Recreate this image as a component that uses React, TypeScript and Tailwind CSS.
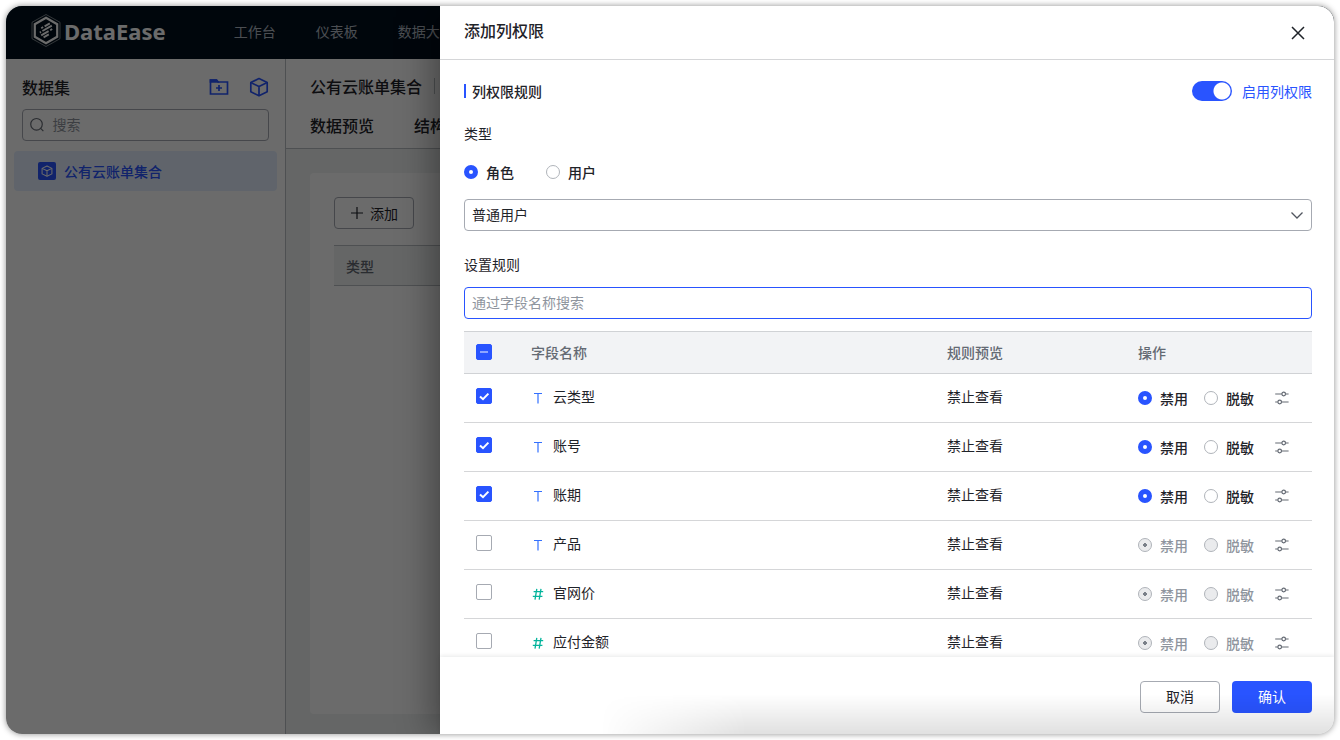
import { useState } from "react";
import { clsx } from "clsx";

interface Field {
  id: string;
  name: string;
  type: "text" | "number";
  checked: boolean;
}

const FIELDS: Field[] = [
  { id: "cloud", name: "云类型", type: "text", checked: true },
  { id: "account", name: "账号", type: "text", checked: true },
  { id: "period", name: "账期", type: "text", checked: true },
  { id: "product", name: "产品", type: "text", checked: false },
  { id: "price", name: "官网价", type: "number", checked: false },
  { id: "payable", name: "应付金额", type: "number", checked: false },
];

const LogoIcon = () => (
  <svg width="32" height="36" viewBox="0 0 32 36" fill="none" stroke="#fff">
    <path d="M16 1.5 30 9.3v16.4L16 33.5 2 25.7V9.3z" strokeWidth="0.8" opacity="0.6" />
    <path d="M16 4.8 27.2 11.2v12.6L16 30.2 4.8 23.8V11.2z" strokeWidth="2.2" />
    <path
      d="M11.2 15.2l2-1.2M14.6 13.4l5.2-3M9.8 19.6l1.2-.7M12.4 18l9.4-5.4M11.2 22.4l7.4-4.3M20.2 17.2l2-1.2M13.6 24.4l5.2-3"
      strokeWidth="1.8"
    />
  </svg>
);

const CubeIcon = ({ size = 20 }: { size?: number }) => (
  <svg
    width={size}
    height={size}
    viewBox="0 0 20 20"
    fill="none"
    stroke="currentColor"
    strokeWidth="1.7"
    strokeLinejoin="round"
  >
    <path d="M10 1.6 18.2 5.6v9.2L10 18.8l-8.2-4V5.6z" />
    <path d="M1.8 5.6 10 9.6l8.2-4M10 9.6v9.2" />
  </svg>
);

const FolderAddIcon = () => (
  <svg width="20" height="20" viewBox="0 0 20 20" fill="none" stroke="currentColor" strokeWidth="1.7">
    <path d="M1.5 17V3h6l1.5 2h9.5v12z" />
    <path d="M1.5 3h6l1.5 2H1.5z" fill="currentColor" />
    <path d="M10 8v6M7 11h6" />
  </svg>
);

const SearchIcon = () => (
  <svg width="16" height="16" viewBox="0 0 16 16" fill="none" stroke="#646a73" strokeWidth="1.3">
    <circle cx="7.2" cy="7.2" r="6.4" />
    <path d="M11.8 11.8 14.8 14.8" />
  </svg>
);

const SettingIcon = () => (
  <svg width="16" height="16" viewBox="0 0 16 16" fill="none" stroke="#646a73" strokeWidth="1.2">
    <path d="M1.2 4h6.6M11.6 4h3M1.2 12h2.6M7.6 12h7" />
    <circle cx="9.7" cy="4" r="1.8" />
    <circle cx="5.7" cy="12" r="1.8" />
  </svg>
);

const FieldIcon = ({ type }: { type: Field["type"] }) =>
  type === "text" ? (
    <svg className="mt-1" width="14" height="14" viewBox="0 0 14 14" fill="none" stroke="#3370ff" strokeWidth="1.2">
      <path d="M3 2.5h8M7 2.5v10" />
    </svg>
  ) : (
    <svg className="mt-1" width="14" height="14" viewBox="0 0 14 14" fill="none" stroke="#04b49c" strokeWidth="1.3">
      <path d="M2.6 4.6h9.6M1.8 9.4h9.6M5.8 1.8 4 12.6M10 1.8 8.2 12.6" />
    </svg>
  );

interface RadioProps {
  name: string;
  label: string;
  checked: boolean;
  disabled?: boolean;
  onChange: () => void;
}

const Radio = ({ name, label, checked, disabled, onChange }: RadioProps) => (
  <label
    className={clsx(
      "flex items-center gap-2 font-medium",
      disabled ? "text-[#8f959e]" : "text-[#1f2329]"
    )}
  >
    <input
      type="radio"
      name={name}
      checked={checked}
      disabled={disabled}
      onChange={onChange}
      className={clsx(
        "size-3.5 shrink-0 appearance-none rounded-full",
        disabled
          ? "border border-[#b0b4ba] bg-[#eaebed]"
          : checked
            ? "border-5 border-[#2954ff] bg-white"
            : "border border-[#b0b4ba] bg-white",
        disabled && checked && "bg-[radial-gradient(circle,#7a8089_2px,transparent_2px)]"
      )}
    />
    {label}
  </label>
);

interface CheckProps {
  label: string;
  checked: boolean;
  mixed?: boolean;
  onChange: () => void;
}

const Check = ({ label, checked, mixed, onChange }: CheckProps) => (
  <span className="grid size-4">
    <input
      type="checkbox"
      aria-label={label}
      checked={checked}
      onChange={onChange}
      className={clsx(
        "col-start-1 row-start-1 size-4 appearance-none rounded-xs border",
        checked || mixed ? "border-[#2954ff] bg-[#2954ff]" : "border-[#a6aab2] bg-white"
      )}
    />
    {(checked || mixed) && (
      <svg
        className="pointer-events-none col-start-1 row-start-1"
        width="16"
        height="16"
        viewBox="0 0 16 16"
        fill="none"
        stroke="#fff"
      >
        {mixed ? (
          <path d="M4 8h8" strokeWidth="1.2" opacity="0.8" />
        ) : (
          <path d="M4 8.4 7 11.2l5.4-5.6" strokeWidth="2" />
        )}
      </svg>
    )}
  </span>
);

const Workspace = () => (
  <div className="flex h-full flex-col bg-white text-[#1f2329]">
    <header className="flex h-[53px] shrink-0 items-center bg-[#00101e] pb-1 pl-6">
      <div className="flex items-center gap-0.5 text-white">
        <LogoIcon />
        <span className="font-['Noto_Sans'] text-[22px] leading-8 font-bold">DataEase</span>
      </div>
      <nav className="ml-17 flex gap-10 whitespace-nowrap text-[#b4bac4]">
        <a href="#workbench">工作台</a>
        <a href="#panel">仪表板</a>
        <a href="#screen">数据大屏</a>
      </nav>
    </header>
    <div className="flex min-h-0 flex-1">
      <aside className="w-[280px] shrink-0 border-r border-[#bbbfc4] px-2 pt-4">
        <div className="flex items-center justify-between px-2">
          <h2 className="text-base font-medium">数据集</h2>
          <div className="flex gap-5 text-[#2954ff]">
            <button aria-label="新建文件夹">
              <FolderAddIcon />
            </button>
            <button aria-label="新建数据集">
              <CubeIcon />
            </button>
          </div>
        </div>
        <label className="mx-2 mt-2.5 flex h-8 items-center gap-2 rounded border border-[#a6aab2] px-[7px]">
          <SearchIcon />
          <input
            type="text"
            aria-label="搜索"
            placeholder="搜索"
            className="w-full min-w-0 pb-0.5 outline-none placeholder:text-[#8f959e]"
          />
        </label>
        <a
          href="#dataset"
          className="mt-2.5 flex h-10 items-center gap-2 rounded bg-[#e4efff] pl-6 font-medium text-[#2954ff]"
        >
          <span className="grid size-[18px] place-items-center rounded-xs bg-[#2954ff] text-white">
            <CubeIcon size={12} />
          </span>
          公有云账单集合
        </a>
      </aside>
      <main className="flex min-w-0 flex-1 flex-col bg-[#f0f4f3]">
        <div className="border-b border-[#bbbfc4] bg-white px-6 pt-[15px]">
          <div className="flex items-center gap-3 text-base font-medium">
            公有云账单集合
            <span className="h-4 w-px bg-[#bbbfc4]" />
          </div>
          <div className="mt-3 flex gap-10 pb-2 text-base leading-[30px] font-medium">
            <a href="#preview">数据预览</a>
            <a href="#structure">结构</a>
          </div>
        </div>
        <section className="mx-6 mt-6 mb-5 flex-1 rounded bg-white p-6">
          <button className="flex h-8 w-20 items-center justify-center gap-1.5 rounded border border-[#a6aab2]">
            <svg width="14" height="14" viewBox="0 0 14 14" stroke="currentColor" strokeWidth="1.2">
              <path d="M1 7h12M7 1v12" />
            </svg>
            添加
          </button>
          <div className="mt-4 flex h-[41px] items-center border-y border-[#bbbfc4] bg-[#f0f4f3] px-3 font-medium text-[#646a73]">
            类型
          </div>
        </section>
      </main>
    </div>
  </div>
);

const ColumnPermissionDrawer = () => {
  const [enabled, setEnabled] = useState(true);
  const [target, setTarget] = useState("role");
  const [keyword, setKeyword] = useState("");
  const [selected, setSelected] = useState<string[]>(
    FIELDS.filter((field) => field.checked).map((field) => field.id)
  );
  const [rules, setRules] = useState<Record<string, string>>({});

  const toggleField = (id: string) => {
    setSelected((prev) =>
      prev.includes(id) ? prev.filter((item) => item !== id) : [...prev, id]
    );
  };

  const allChecked = selected.length === FIELDS.length;

  return (
    <div
      role="dialog"
      aria-label="添加列权限"
      className="absolute inset-y-0 right-0 left-[434px] flex flex-col bg-white text-[#1f2329] shadow-[-8px_0_32px_rgba(0,0,0,0.35)]"
    >
      <div className="flex h-[54px] shrink-0 items-center justify-between border-b border-[#d5d6d8] pr-7 pl-6">
        <h1 className="pb-1.5 text-base font-medium">添加列权限</h1>
        <button aria-label="关闭">
          <svg width="16" height="16" viewBox="0 0 16 16" stroke="#1f2329" strokeWidth="1.5">
            <path d="m2 2 12 12M14 2 2 14" />
          </svg>
        </button>
      </div>

      <div className="min-h-0 flex-1 overflow-hidden pr-[22px] pl-6">
        <div className="mt-5 flex items-center justify-between">
          <h2 className="flex items-center gap-1.5 font-medium">
            <span className="h-3.5 w-0.5 bg-[#2954ff]" />
            列权限规则
          </h2>
          <label className="flex items-center gap-2.5 text-[#2954ff]">
            <input
              type="checkbox"
              role="switch"
              checked={enabled}
              onChange={() => setEnabled(!enabled)}
              className="h-5 w-10 appearance-none rounded-full bg-[#bbbfc4] bg-[radial-gradient(circle_at_10px_10px,#fff_8px,transparent_9px)] checked:bg-[#2954ff] checked:bg-[radial-gradient(circle_at_30px_10px,#fff_8px,transparent_9px)]"
            />
            启用列权限
          </label>
        </div>

        <h3 className="mt-5">类型</h3>
        <div className="mt-[17px] flex gap-8">
          <Radio
            name="target"
            label="角色"
            checked={target === "role"}
            onChange={() => setTarget("role")}
          />
          <Radio
            name="target"
            label="用户"
            checked={target === "user"}
            onChange={() => setTarget("user")}
          />
        </div>
        <div className="mt-4 grid items-center">
          <select
            aria-label="角色"
            className="col-start-1 row-start-1 h-8 w-full appearance-none rounded border border-[#a6aab2] bg-white px-[7px] pb-0.5"
          >
            <option>普通用户</option>
          </select>
          <svg
            className="pointer-events-none col-start-1 row-start-1 mr-2 justify-self-end"
            width="14"
            height="14"
            viewBox="0 0 14 14"
            fill="none"
            stroke="#51565f"
            strokeWidth="1.3"
          >
            <path d="m1.5 4.5 5.5 5.5 5.5-5.5" />
          </svg>
        </div>

        <h3 className="mt-[22px]">
          <label htmlFor="field-search">设置规则</label>
        </h3>
        <input
          id="field-search"
          type="text"
          value={keyword}
          onChange={(e) => setKeyword(e.target.value)}
          placeholder="通过字段名称搜索"
          className="mt-3 block h-8 w-full rounded border border-[#2954ff] px-[7px] pb-0.5 outline-none placeholder:text-[#8f959e]"
        />

        <table className="mt-3 w-full table-fixed border-collapse text-left">
          <colgroup>
            <col className="w-[55px]" />
            <col />
            <col className="w-[191px]" />
            <col className="w-[186px]" />
          </colgroup>
          <thead>
            <tr className="h-[42px] border-y border-[#d0d2d5] bg-[#f2f3f5] text-[#646a73]">
              <th className="px-3 pb-0.5">
                <Check
                  label="全选"
                  checked={allChecked}
                  mixed={selected.length > 0 && !allChecked}
                  onChange={() => setSelected(allChecked ? [] : FIELDS.map((field) => field.id))}
                />
              </th>
              <th className="px-3 pb-0.5 font-medium">字段名称</th>
              <th className="px-3 pb-0.5 font-medium">规则预览</th>
              <th className="px-3 pb-0.5 font-medium">操作</th>
            </tr>
          </thead>
          <tbody>
            {FIELDS.filter((field) => field.name.includes(keyword)).map((field) => {
              const active = selected.includes(field.id);
              const rule = rules[field.id] ?? "ban";
              return (
                <tr key={field.id} className="h-[49px] border-b border-[#d5d6d8]">
                  <td className="px-3 pb-1">
                    <Check
                      label={field.name}
                      checked={active}
                      onChange={() => toggleField(field.id)}
                    />
                  </td>
                  <td className="px-3 pb-1">
                    <span className="flex items-center gap-2">
                      <FieldIcon type={field.type} />
                      {field.name}
                    </span>
                  </td>
                  <td className="px-3 pb-1">{rule === "ban" ? "禁止查看" : "脱敏"}</td>
                  <td className="px-3">
                    <div className="flex items-center gap-4 whitespace-nowrap">
                      <Radio
                        name={field.id}
                        label="禁用"
                        checked={rule === "ban"}
                        disabled={!active}
                        onChange={() => setRules({ ...rules, [field.id]: "ban" })}
                      />
                      <Radio
                        name={field.id}
                        label="脱敏"
                        checked={rule === "mask"}
                        disabled={!active}
                        onChange={() => setRules({ ...rules, [field.id]: "mask" })}
                      />
                      <button aria-label="设置" className="ml-1">
                        <SettingIcon />
                      </button>
                    </div>
                  </td>
                </tr>
              );
            })}
          </tbody>
        </table>
      </div>

      <div className="z-10 flex h-[77px] shrink-0 items-start justify-end gap-3 bg-white pt-6 pr-[22px] shadow-[0_-1px_4px_rgba(31,35,41,0.1)]">
        <button className="h-8 w-20 rounded border border-[#a6aab2] bg-white pb-0.5">取消</button>
        <button className="h-8 w-20 rounded bg-[#2954ff] pb-0.5 text-white">确认</button>
      </div>
      <div className="pointer-events-none absolute right-0 bottom-0 left-40 z-20 h-10 bg-linear-to-t from-black/12 to-transparent mask-l-from-80% mask-l-to-100%" />
    </div>
  );
};

export default function App() {
  return (
    <div className="h-screen bg-white p-1.5 font-['Noto_Sans_CJK_SC',sans-serif] text-sm leading-[22px]">
      <div className="relative h-full overflow-hidden rounded-2xl shadow-[0_0_6px_rgba(0,0,0,0.45)]">
        <Workspace />
        <div className="absolute inset-0 bg-black/58" />
        <ColumnPermissionDrawer />
      </div>
    </div>
  );
}
